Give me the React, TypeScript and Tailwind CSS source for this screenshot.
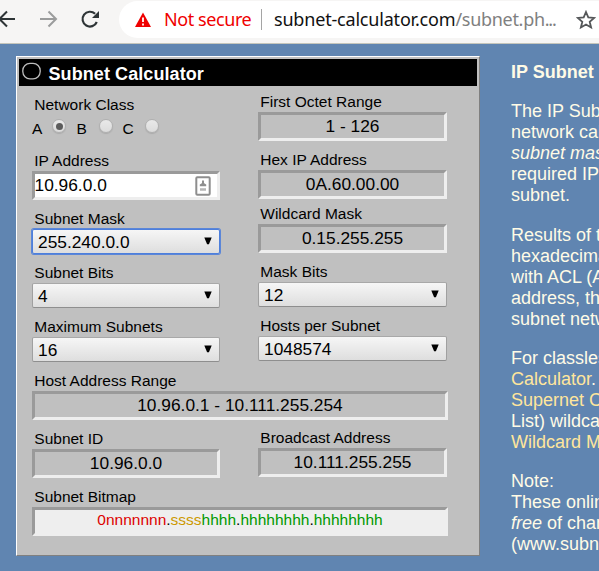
import type { ReactNode } from "react";

function Label({ children }: { children: ReactNode }) {
  return <div className="h-5 pl-[2.3px] text-[15.5px] leading-5 whitespace-nowrap">{children}</div>;
}

function Output({ label, value, className = "" }: { label: string; value: string; className?: string }) {
  return (
    <div className={className}>
      <Label>{label}</Label>
      <div className="h-[29px] border-[3px] border-t-[#9a9a9a] border-r-[#eeeeee] border-b-[#eeeeee] border-l-[#9a9a9a] text-center text-[17.33px] leading-[23px]">
        {value}
      </div>
    </div>
  );
}

function Select({ label, value, focused = false, className = "" }: { label: string; value: string; focused?: boolean; className?: string }) {
  return (
    <div className={className}>
      <Label>{label}</Label>
      <div
        className={
          "flex h-[25px] items-center justify-between rounded-[2px] border bg-linear-to-b from-[#f6f6f6] to-[#dedede] pr-[7px] pl-[5px] text-[17.33px] leading-[23px] " +
          (focused
            ? "border-[#4d7fdc] shadow-[0_0_0_1px_#5b86d8]"
            : "border-t-[#a8a8a8] border-r-[#a0a0a0] border-b-[#8e8e8e] border-l-[#a0a0a0]")
        }
      >
        <span className="pt-0.5">{value}</span>
        <svg width="8" height="8" viewBox="0 0 8 8" className="-mt-px">
          <path d="M0.3 0.5H7.7L4.9 7.2H3.1Z" fill="#000" />
        </svg>
      </div>
    </div>
  );
}

function Radio({ checked = false }: { checked?: boolean }) {
  return (
    <span className="flex size-[14px] items-center justify-center rounded-full border border-[#b0b0b0] bg-linear-to-b from-[#e9e9e9] to-[#dcdcdc] shadow-[0_1px_1px_#aaaaaa]">
      {checked && <span className="size-[7px] rounded-full bg-[#5c5c5c]" />}
    </span>
  );
}

function Toolbar() {
  return (
    <div className="flex h-11 w-full border-b border-[#c5c5bb] bg-[#f6f5f4]">
      <svg width="119" height="43" viewBox="0 0 119 43" fill="none" className="shrink-0">
        <path d="M15 19H0M7 11.5L-0.5 19L7 26.5" stroke="#2e3436" strokeWidth="2" />
        <path d="M40 19H56M48.5 11.5L56 19L48.5 26.5" stroke="#9b9c9c" strokeWidth="2" />
        <path d="M96.8 22A7.4 7.4 0 1 1 95.1 13.8" stroke="#2e3436" strokeWidth="2.2" />
        <path d="M99 11V18H92Z" fill="#2e3436" />
      </svg>
      <div className="mt-px flex h-[37px] flex-1 items-center rounded-l-full bg-white pl-[15px] font-['Noto_Sans',sans-serif] text-[18px] whitespace-nowrap">
        <svg width="18" height="16" viewBox="0 0 18 16" className="shrink-0">
          <path d="M9 0.5L17 15H1Z" fill="#ef0000" />
          <path d="M9 5.5V10M9 11.5V13.5" stroke="#fff" strokeWidth="1.8" />
        </svg>
        <span className="ml-3 w-[97px] tracking-[-0.42px] text-[#ef0000]">Not secure</span>
        <span className="h-[21px] w-px bg-[#a5a5a5]" />
        <span className="ml-[12px] w-[302px] tracking-[-0.19px] text-[#111111]">
          subnet-calculator.com
          <span className="tracking-[-0.3px] text-[#808080]">
            /subnet.ph<span className="tracking-[-1.2px]">...</span>
          </span>
        </span>
        <svg width="20" height="20" viewBox="0 0 20 20" fill="none" className="shrink-0">
          <path d="M10 2L12.3 7.4L18.2 7.9L13.7 11.8L15.1 17.5L10 14.5L4.9 17.5L6.3 11.8L1.8 7.9L7.7 7.4Z" stroke="#555759" strokeWidth="1.8" />
        </svg>
      </div>
    </div>
  );
}

function Calculator() {
  return (
    <div className="mt-3 ml-4 h-[500px] w-[464px] shrink-0 border border-t-white border-r-[#808080] border-b-[#808080] border-l-white bg-[#c0c0c0] p-0.5">
      <div className="flex h-[27px] items-center bg-black pl-[3px] text-white">
        <svg width="20" height="19" viewBox="0 0 20 19" fill="none" className="-mt-1">
          <rect x="0.8" y="2.4" width="17.4" height="15.4" rx="7.2" stroke="#bdbdbd" strokeWidth="1.3" />
        </svg>
        <span className="mt-[3px] ml-[6.5px] text-[18px] font-bold tracking-[0.08px] whitespace-nowrap">Subnet Calculator</span>
      </div>
      <div className="pl-[13px]">
        <div className="flex gap-[38px]">
          <div className="w-[188px] pt-[9px]">
            <Label>Network Class</Label>
            <div className="flex h-9 pt-1 text-[15.5px] leading-5">
              <span className="w-5">A</span>
              <Radio checked />
              <span className="ml-[10.5px] w-[22px]">B</span>
              <Radio />
              <span className="ml-[10px] w-[22px]">C</span>
              <Radio />
            </div>
            <Label>IP Address</Label>
            <div className="flex h-[29px] items-center justify-between border-[3px] border-t-[#9a9a9a] border-r-[#eeeeee] border-b-[#eeeeee] border-l-[#9a9a9a] bg-white pr-[6px] text-[17.33px] leading-[23px]">
              <span className="-ml-[0.5px]">10.96.0.0</span>
              <svg width="16" height="20" viewBox="0 0 16 20" fill="none">
                <rect x="1.3" y="1.3" width="13.4" height="17.4" rx="1" stroke="#8e8e8e" strokeWidth="2" />
                <path d="M8 4.5V7.5" stroke="#8e8e8e" strokeWidth="2" />
                <path d="M4.8 10.2V8.5L8 6.5L11.2 8.5V10.2Z" fill="#8e8e8e" />
                <path d="M5 13.5H11" stroke="#b5b5b5" strokeWidth="2.5" />
              </svg>
            </div>
            <Select className="mt-[9px]" label="Subnet Mask" value="255.240.0.0" focused />
            <Select className="mt-[9px]" label="Subnet Bits" value="4" />
            <Select className="mt-[9px]" label="Maximum Subnets" value="16" />
          </div>
          <div className="w-[189px] pt-[6px]">
            <Output label="First Octet Range" value="1 - 126" />
            <Output className="mt-[9px]" label="Hex IP Address" value="0A.60.00.00" />
            <Output className="mt-[5px]" label="Wildcard Mask" value="0.15.255.255" />
            <Select className="mt-[9px]" label="Mask Bits" value="12" />
            <Select className="mt-[9px]" label="Hosts per Subnet" value="1048574" />
          </div>
        </div>
        <Output className="mt-[9px] w-[416px]" label="Host Address Range" value="10.96.0.1 - 10.111.255.254" />
        <div className="mt-2 flex gap-[38px]">
          <Output className="w-[188px] pt-px" label="Subnet ID" value="10.96.0.0" />
          <Output className="w-[189px]" label="Broadcast Address" value="10.111.255.255" />
        </div>
        <div className="mt-[9px] w-[416px]">
          <Label>Subnet Bitmap</Label>
          <div className="h-[29px] border-[3px] border-t-[#9a9a9a] border-r-[#eeeeee] border-b-[#eeeeee] border-l-[#9a9a9a] bg-[#eeeeee] text-center text-[15.5px] leading-5">
            <span className="text-[#dd0000]">0nnnnnnn</span>.<span className="text-[#cc9900]">ssss</span>
            <span className="text-[#009900]">hhhh</span>.<span className="text-[#009900]">hhhhhhhh</span>.
            <span className="text-[#009900]">hhhhhhhh</span>
          </div>
        </div>
      </div>
    </div>
  );
}

function Notes() {
  return (
    <div className="ml-[31px] flex h-[527px] flex-1 flex-col gap-[18.5px] overflow-hidden pt-[17.5px] text-[18px] leading-[21px] whitespace-nowrap text-[#fffbe6]">
      <div className="font-bold">IP Subnet Calculator</div>
      <div>
        <div>The IP Subnet</div>
        <div>network calculations</div>
        <div className="italic">subnet mask</div>
        <div>required IP</div>
        <div>subnet.</div>
      </div>
      <div>
        <div>Results of the</div>
        <div>hexadecimal</div>
        <div>with ACL (Access</div>
        <div>address, the</div>
        <div>subnet network</div>
      </div>
      <div>
        <div>For classless</div>
        <div><span className="text-[#ffe69c]">Calculator</span>.</div>
        <div className="text-[#ffe69c]">Supernet Calculator</div>
        <div>List) wildcard</div>
        <div className="text-[#ffe69c]">Wildcard Mask</div>
      </div>
      <div className="-mt-[0.7px]">
        <div>Note:</div>
        <div>These online</div>
        <div><span className="italic">free</span> of charge</div>
        <div>(www.subnet-calculator.com)</div>
      </div>
    </div>
  );
}

export default function App() {
  return (
    <div className="h-[571px] w-[599px] overflow-hidden bg-[#6085b1] font-['Liberation_Sans',Arial,sans-serif] text-black">
      <Toolbar />
      <div className="flex">
        <Calculator />
        <Notes />
      </div>
    </div>
  );
}
